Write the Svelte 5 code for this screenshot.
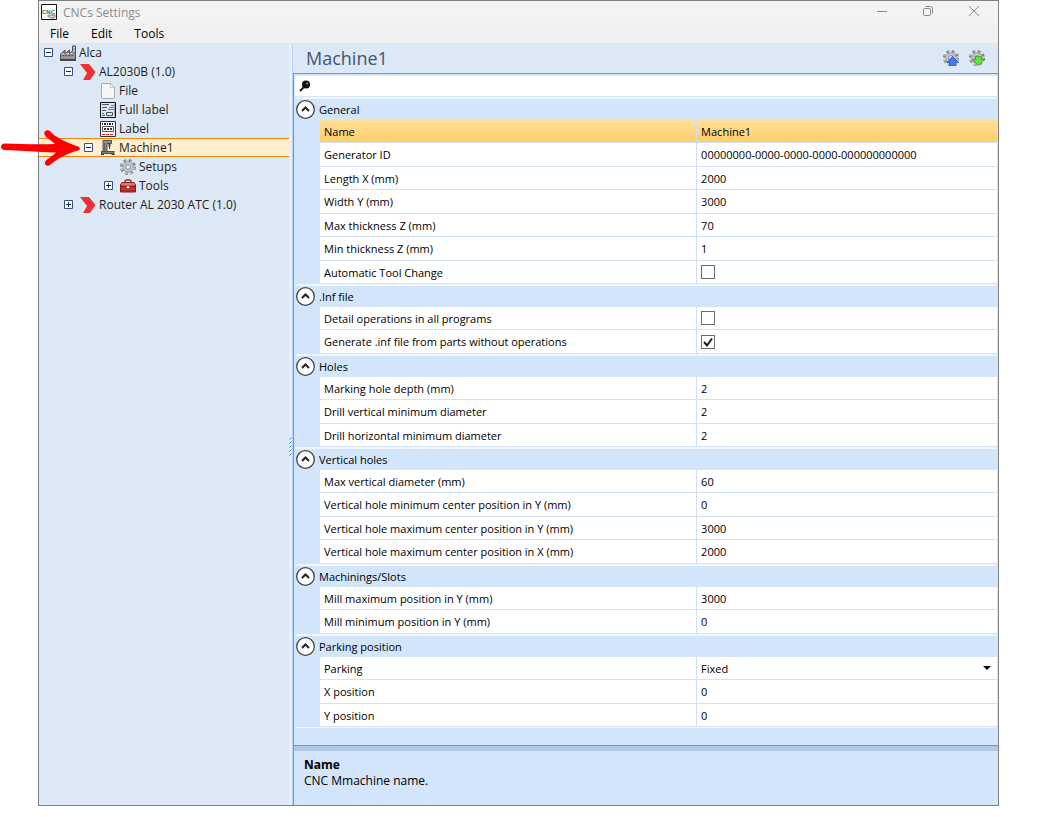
<script>
  let selectedNode = $state('Machine1');
  let selectedRow = $state('Name');
  let search = $state('');

  const menus = ['File', 'Edit', 'Tools'];

  const nodes = [
    { label: 'Alca', depth: 0, icon: 'factory', toggle: 'minus' },
    { label: 'AL2030B (1.0)', depth: 1, icon: 'chevron', toggle: 'minus' },
    { label: 'File', depth: 2, icon: 'file' },
    { label: 'Full label', depth: 2, icon: 'fullLabel' },
    { label: 'Label', depth: 2, icon: 'label' },
    { label: 'Machine1', depth: 2, icon: 'machine', toggle: 'minus' },
    { label: 'Setups', depth: 3, icon: 'gear' },
    { label: 'Tools', depth: 3, icon: 'toolbox', toggle: 'plus' },
    { label: 'Router AL 2030 ATC (1.0)', depth: 1, icon: 'chevron', toggle: 'plus' }
  ];

  let groups = $state([
    {
      title: 'General',
      open: true,
      rows: [
        { label: 'Name', value: 'Machine1' },
        { label: 'Generator ID', value: '00000000-0000-0000-0000-000000000000' },
        { label: 'Length X (mm)', value: '2000' },
        { label: 'Width Y (mm)', value: '3000' },
        { label: 'Max thickness Z (mm)', value: '70' },
        { label: 'Min thickness Z (mm)', value: '1' },
        { label: 'Automatic Tool Change', value: false }
      ]
    },
    {
      title: '.Inf file',
      open: true,
      rows: [
        { label: 'Detail operations in all programs', value: false },
        { label: 'Generate .inf file from parts without operations', value: true }
      ]
    },
    {
      title: 'Holes',
      open: true,
      rows: [
        { label: 'Marking hole depth (mm)', value: '2' },
        { label: 'Drill vertical minimum diameter', value: '2' },
        { label: 'Drill horizontal minimum diameter', value: '2' }
      ]
    },
    {
      title: 'Vertical holes',
      open: true,
      rows: [
        { label: 'Max vertical diameter (mm)', value: '60' },
        { label: 'Vertical hole minimum center position in Y (mm)', value: '0' },
        { label: 'Vertical hole maximum center position in Y (mm)', value: '3000' },
        { label: 'Vertical hole maximum center position in X (mm)', value: '2000' }
      ]
    },
    {
      title: 'Machinings/Slots',
      open: true,
      rows: [
        { label: 'Mill maximum position in Y (mm)', value: '3000' },
        { label: 'Mill minimum position in Y (mm)', value: '0' }
      ]
    },
    {
      title: 'Parking position',
      open: true,
      rows: [
        { label: 'Parking', value: 'Fixed', options: ['Fixed'] },
        { label: 'X position', value: '0' },
        { label: 'Y position', value: '0' }
      ]
    }
  ]);
</script>

{#snippet gearShape()}
  <g fill="none">
    <circle cx="8" cy="8" r="6.5" stroke="#7f8388" stroke-width="3" stroke-dasharray="2.8 2.3" />
    <circle cx="8" cy="8" r="6.1" stroke="#c4c6c8" stroke-width="2" stroke-dasharray="2 3" stroke-dashoffset="-0.4" />
    <circle cx="8" cy="8" r="4" fill="#c9cbcd" stroke="#8a8d91" stroke-width="3" />
    <circle cx="8" cy="8" r="3.8" stroke="#c9cbcd" stroke-width="2" />
    <circle cx="8" cy="8" r="2.3" fill="#e9eff7" stroke="#94979b" />
  </g>
{/snippet}

{#snippet nodeIcon(name)}
  <svg class="icon" viewBox="0 0 16 16" aria-hidden="true">
    {#if name === 'factory'}
      <path d="M0.5 14.500V9l4.500-4v3.500L9.500 5v3.500L12.500 6V1h3v13.500z" fill="#8d8d8d" stroke="#505050" />
      <path d="M1.500 9h3M6 8.800h3M10.500 8.500h2" stroke="#dddddd" />
      <path d="M13 2h2v1.500h-2zM13 5h2v1.500h-2z" fill="#d5d5d5" />
      <path d="M2 10.500h12" stroke="#5c5c5c" stroke-dasharray="2 1" />
      <path d="M1 12.500h14" stroke="#a8a8a8" />
      <path d="M0 15h16" stroke="#484848" stroke-width="2" />
    {:else if name === 'chevron'}
      <path d="M0 0h9l6.500 8-5.500 8H3l4-7z" fill="#ee3035" />
    {:else if name === 'file'}
      <path d="M2.500 0.500H10.500l4 4v10q0 1-1 1h-11q-1 0-1-1v-13q0-1 1-1z" fill="#f6f6f6" stroke="#a9adb3" />
      <path d="M10.500 1v3.500H14" fill="#ffffff" stroke="#c3c6ca" />
    {:else if name === 'fullLabel'}
      <path d="M0.500 0.500h15v15H0.500z" fill="#dde8f6" stroke="#111111" />
      <path d="M2 2.500h7M2 5.500h5M2 8.500h4M2 11.500h2M2 13.500h3" stroke="#55585e" />
      <path d="M9 5.500h5M8 7.500h6M11 3.500h3" stroke="#747a84" />
      <path d="M6.500 10.500h6v3h-6z" fill="none" stroke="#55585e" />
      <path d="M14.500 2v12" stroke="#9ba3b0" />
    {:else if name === 'label'}
      <path d="M0.500 0.500h15v15H0.500z" fill="#ffffff" stroke="#333333" />
      <path d="M2 3h12" stroke="#222222" stroke-width="2" stroke-dasharray="1 1 2 1" />
      <path d="M2.500 5.500h11v5h-11z" fill="none" stroke="#555555" />
      <path d="M4 8h2M7 8h2M10 8h2" stroke="#333333" stroke-width="2" />
      <path d="M2 13.500h12" stroke="#e01818" stroke-dasharray="3 1" />
    {:else if name === 'machine'}
      <path d="M3 0.500h8.500v3H7v8H3z" fill="#8d8f93" stroke="#505257" />
      <path d="M4.500 3v8" stroke="#5d6065" />
      <path d="M9.500 3v3.500" stroke="#3f4246" stroke-width="2" />
      <path d="M9.500 6v3" stroke="#3f4246" />
      <path d="M1 11h13.500v3H1z" fill="#505257" />
      <path d="M2 12.500h11.500" stroke="#7d8085" />
      <path d="M1 14.500h3M11.500 14.500h3" stroke="#3a3c40" />
    {:else if name === 'gear'}
      {@render gearShape()}
    {:else if name === 'toolbox'}
      <path d="M5 4.500v-1q0-1.500 1.500-1.500h3q1.500 0 1.500 1.500v1" fill="none" stroke="#6b4040" stroke-width="1.500" />
      <path d="M2 4.500h12l1.500 2v7.500h-15V6.500z" fill="#d22c2c" stroke="#8e1717" />
      <path d="M2 5h12l1 2.500H1z" fill="#ec716a" />
      <path d="M1 8.500h14" stroke="#8c1717" />
      <path d="M6.500 7.500h3v3h-3z" fill="#f0e6e6" stroke="#8a6464" />
      <path d="M1 12.500h14" stroke="#b32020" />
    {/if}
  </svg>
{/snippet}

<div class="window">
  <header class="titlebar">
    <svg class="app-icon" viewBox="0 0 16 16" aria-hidden="true">
      <path d="M0.500 0.500h15v15H0.500z" fill="#ffffff" stroke="#111111" />
      <text class="app-mark" x="1" y="10">CNC</text>
      <path d="M6 12l2-2 2 1 1-2 3 1 1 2-1 2-3 1-2-1-2-1z" fill="#a2a2a2" />
      <path d="M9 12.500h4" stroke="#dcdcdc" />
    </svg>
    <span class="caption">CNCs Settings</span>
    <button class="control" aria-label="Minimize">
      <svg viewBox="0 0 12 12"><path d="M1 6.500h10" /></svg>
    </button>
    <button class="control" aria-label="Restore">
      <svg viewBox="0 0 12 12"><rect x="1.500" y="3.500" width="7" height="7" rx="1" /><path d="M3.500 1.500h5q2 0 2 2v5" /></svg>
    </button>
    <button class="control" aria-label="Close">
      <svg viewBox="0 0 12 12"><path d="M1 1l10 10M11 1L1 11" /></svg>
    </button>
  </header>

  <nav class="menu">
    {#each menus as menu}
      <button>{menu}</button>
    {/each}
  </nav>

  <div class="content">
    <aside class="tree">
      {#each nodes as node}
        <div class="node depth-{node.depth}" class:selected={selectedNode === node.label}>
          {#if node.label === 'Machine1'}
            <svg class="pointer" viewBox="0 0 82 38" aria-hidden="true">
              <path d="M4 14.500C20 15 38 15.500 55 15C51 10.500 46 9.500 44.500 5.500C43.500 2 47 0 50 2C54 8 68 14 78 17.500Q82 19.500 78 21.500C68 24 57 30 50.500 35.500C48 38 44 36.500 45 33C47 29.500 53 27 56 23.500C38 23 20 21.500 4 21C0 20 0 15.500 4 14.500z" fill="#ff0000" />
            </svg>
          {/if}
          {#if node.toggle}
            <button class="expander" aria-label="Toggle {node.label}">
              <svg viewBox="0 0 9 9">
                <path d="M0.500 0.500h8v8h-8z" fill="#ffffff" stroke="#34517f" />
                <path d={node.toggle === 'plus' ? 'M2 4.500h5M4.500 2v5' : 'M2 4.500h5'} stroke="#1c2f55" />
              </svg>
            </button>
          {:else}
            <span class="expander"></span>
          {/if}
          <button class="node-name" onclick={() => (selectedNode = node.label)}>
            {@render nodeIcon(node.icon)}
            <span>{node.label}</span>
          </button>
        </div>
      {/each}
    </aside>

    <div class="splitter">
      <svg viewBox="0 0 4 20" aria-hidden="true">
        <path d="M0.500 3.500l2-2M0.500 7.500l2-2M0.500 11.500l2-2M0.500 15.500l2-2M0.500 19.500l2-2" stroke="#2b7bdb" />
      </svg>
    </div>

    <main class="panel">
      <div class="panel-header">
        <h1>Machine1</h1>
        <button class="action" aria-label="Export settings">
          <svg viewBox="0 0 16 16">
            {@render gearShape()}
            <path d="M9.500 6.500l6 6H13v3H6.500v-3H4z" fill="#3f7df0" stroke="#2456bd" stroke-width="0.800" />
          </svg>
        </button>
        <button class="action" aria-label="Import settings">
          <svg viewBox="0 0 16 16">
            {@render gearShape()}
            <path d="M6.500 6.500h6v3h3l-6 6-6-6h3z" fill="#5be83c" stroke="#2fa51b" stroke-width="0.800" />
          </svg>
        </button>
      </div>

      <div class="grid">
        <div class="search">
          <svg viewBox="0 0 12 12" aria-hidden="true">
            <path d="M1 11l4-4" stroke="#1a1a1a" stroke-width="2" />
            <circle cx="7" cy="4.500" r="4" fill="#111111" />
            <circle cx="8" cy="3.500" r="1" fill="#8fa3bd" />
          </svg>
          <input type="text" aria-label="Search" bind:value={search} />
        </div>

        {#each groups as group, g}
          <section class="group">
            <div class="group-header">
              <button class="collapse" aria-label="Toggle {group.title}" onclick={() => (group.open = !group.open)}>
                <svg viewBox="0 0 19 19" class:closed={!group.open}>
                  <circle cx="9.500" cy="9.500" r="8.800" fill="#ffffff" stroke="#444444" stroke-width="1.300" />
                  <path d="M6 11l3.500-3.500L13 11" fill="none" stroke="#222222" stroke-width="2" />
                </svg>
              </button>
              <h2>{group.title}</h2>
            </div>
            {#if group.open}
              <div class="rows">
                {#each group.rows as row, r}
                  <div class="row" class:current={selectedRow === row.label} onfocusin={() => (selectedRow = row.label)}>
                    <label for="field-{g}-{r}">{row.label}</label>
                    <div class="value">
                      {#if row.options}
                        <select id="field-{g}-{r}" bind:value={row.value}>
                          {#each row.options as option}
                            <option>{option}</option>
                          {/each}
                        </select>
                        <svg class="caret" viewBox="0 0 8 4" aria-hidden="true"><path d="M0 0h8L4 4z" /></svg>
                      {:else if typeof row.value === 'boolean'}
                        <input id="field-{g}-{r}" type="checkbox" bind:checked={row.value} />
                        <svg class="tick" viewBox="0 0 14 14" aria-hidden="true"><path d="M3 7l3 3.500L11 3.500" /></svg>
                      {:else}
                        <input id="field-{g}-{r}" type="text" bind:value={row.value} />
                      {/if}
                    </div>
                  </div>
                {/each}
              </div>
            {/if}
          </section>
        {/each}
      </div>

      <footer class="description">
        <strong>Name</strong>
        <p>CNC Mmachine name.</p>
      </footer>
    </main>
  </div>
</div>

<style>
  :global(body) {
    background: #ffffff;
  }

  :global(#app) {
    height: 100vh;
    min-height: 760px;
  }

  .window,
  .window * {
    box-sizing: border-box;
  }

  .window {
    display: flex;
    flex-direction: column;
    height: calc(100% - 11px);
    margin: 0 38px;
    border: 1px solid #808080;
    background: #f0f0f0;
    color: #000000;
    font-family: 'Open Sans', 'Noto Sans', sans-serif;
    font-size: 12px;
  }

  button,
  input,
  select {
    margin: 0;
    padding: 0;
    border: none;
    background: none;
    color: inherit;
    font: inherit;
  }

  svg {
    display: block;
    flex: none;
  }

  h1,
  h2,
  p {
    margin: 0;
    font-weight: 400;
  }

  /* Title bar and menu */
  .titlebar {
    display: flex;
    align-items: center;
    flex: none;
    height: 22px;
    padding: 0 1px 0 2px;
    background: #f3f3f3;
  }

  .app-icon {
    width: 16px;
    height: 16px;
  }

  .app-mark {
    fill: #167d2e;
    font-family: 'Liberation Sans', sans-serif;
    font-size: 6px;
    font-weight: 700;
  }

  .caption {
    flex: 1;
    padding-left: 6px;
    color: #8c8c8c;
  }

  .control {
    display: flex;
    justify-content: center;
    width: 46px;
    padding-bottom: 3px;
  }

  .control svg {
    width: 12px;
    height: 12px;
    fill: none;
    stroke: #8a8a8a;
  }

  .menu {
    display: flex;
    flex: none;
    height: 20px;
  }

  .menu button {
    padding: 0 11px;
  }

  .content {
    display: flex;
    flex: 1;
    min-height: 0;
  }

  /* Tree */
  .tree {
    flex: none;
    width: 250px;
    background: #dde8f6;
  }

  .node {
    position: relative;
    display: flex;
    align-items: center;
    gap: 7px;
    height: 19px;
    padding-left: 5px;
    color: #1e1e1e;
  }

  .depth-1 {
    padding-left: 25px;
  }

  .depth-2 {
    padding-left: 45px;
  }

  .depth-3 {
    padding-left: 65px;
  }

  .selected {
    background: #ffefcf;
    box-shadow: inset 0 1px #f5820b, inset 0 -1px #f5820b;
  }

  .expander {
    flex: none;
    width: 9px;
    height: 9px;
  }

  .node-name {
    display: flex;
    align-items: center;
    gap: 3px;
    white-space: nowrap;
  }

  .icon {
    width: 16px;
    height: 16px;
  }

  .pointer {
    position: absolute;
    left: -39px;
    top: -9px;
    width: 82px;
    height: 38px;
  }

  .splitter {
    display: flex;
    align-items: center;
    flex: none;
    width: 4px;
    padding-top: 43px;
    border-right: 1px solid #b5d4fb;
    background: #e9eff7;
  }

  .splitter svg {
    width: 4px;
    height: 20px;
  }

  /* Properties */
  .panel {
    display: flex;
    flex: 1;
    flex-direction: column;
    min-width: 0;
    background: #d3e5fb;
  }

  .panel-header {
    display: flex;
    align-items: center;
    gap: 10px;
    flex: none;
    height: 30px;
    padding: 0 13px;
    background: #dde8f6;
  }

  h1 {
    flex: 1;
    color: #3f5770;
    font-size: 18px;
  }

  .action svg {
    width: 16px;
    height: 16px;
  }

  .grid {
    flex: 1;
    min-height: 0;
    padding: 2px 1px 0;
    border-top: 1px solid #6f98d0;
    border-left: 1px solid #6f98d0;
    overflow: hidden;
  }

  .search {
    display: flex;
    align-items: center;
    height: 20px;
    margin-bottom: 1px;
    padding-left: 4px;
    background: #ffffff;
  }

  .search svg {
    width: 12px;
    height: 12px;
  }

  .search input {
    flex: 1;
    padding-left: 4px;
    outline: none;
  }

  .group {
    border-top: 2px solid #f1f7fe;
    border-radius: 3px;
    font-size: 11px;
  }

  .group:last-child {
    border-bottom: 1px solid #f1f7fe;
  }

  .group-header {
    display: flex;
    align-items: center;
    gap: 4px;
    height: 21px;
    padding-left: 1px;
  }

  .collapse svg {
    width: 19px;
    height: 19px;
  }

  .closed {
    transform: rotate(180deg);
  }

  h2 {
    font-size: 11px;
  }

  .rows {
    margin-left: 25px;
    background: #ffffff;
  }

  .row {
    display: grid;
    grid-template-columns: 5fr 4fr;
    height: 23px;
    border-bottom: 1px solid #d3e2f5;
  }

  .row:nth-child(even) {
    height: 24px;
  }

  .row label {
    align-self: center;
    padding-left: 4px;
    white-space: nowrap;
  }

  .value {
    display: grid;
    align-items: center;
    padding-left: 4px;
    border-left: 1px solid #cfe0f6;
  }

  .value > * {
    grid-area: 1 / 1;
  }

  .value input,
  .value select {
    width: 100%;
    outline: none;
    appearance: none;
  }

  .current {
    background: linear-gradient(#ffdf9b, #ffce69);
  }

  .value input[type='checkbox'] {
    width: 14px;
    height: 14px;
    border: 1px solid #6b6b6b;
    background: #ffffff;
  }

  .tick {
    width: 14px;
    height: 14px;
    fill: none;
    stroke: #1c1c1c;
    stroke-width: 2;
    pointer-events: none;
    visibility: hidden;
  }

  input:checked + .tick {
    visibility: visible;
  }

  .caret {
    justify-self: end;
    width: 8px;
    height: 4px;
    margin-right: 6px;
    pointer-events: none;
  }

  .description {
    flex: none;
    height: 60px;
    padding: 11px 10px 0;
    border-top: 1px solid #6f98d0;
    border-left: 1px solid #6f98d0;
    box-shadow: inset 0 5px #b0c7e8;
    line-height: 16px;
  }
</style>
